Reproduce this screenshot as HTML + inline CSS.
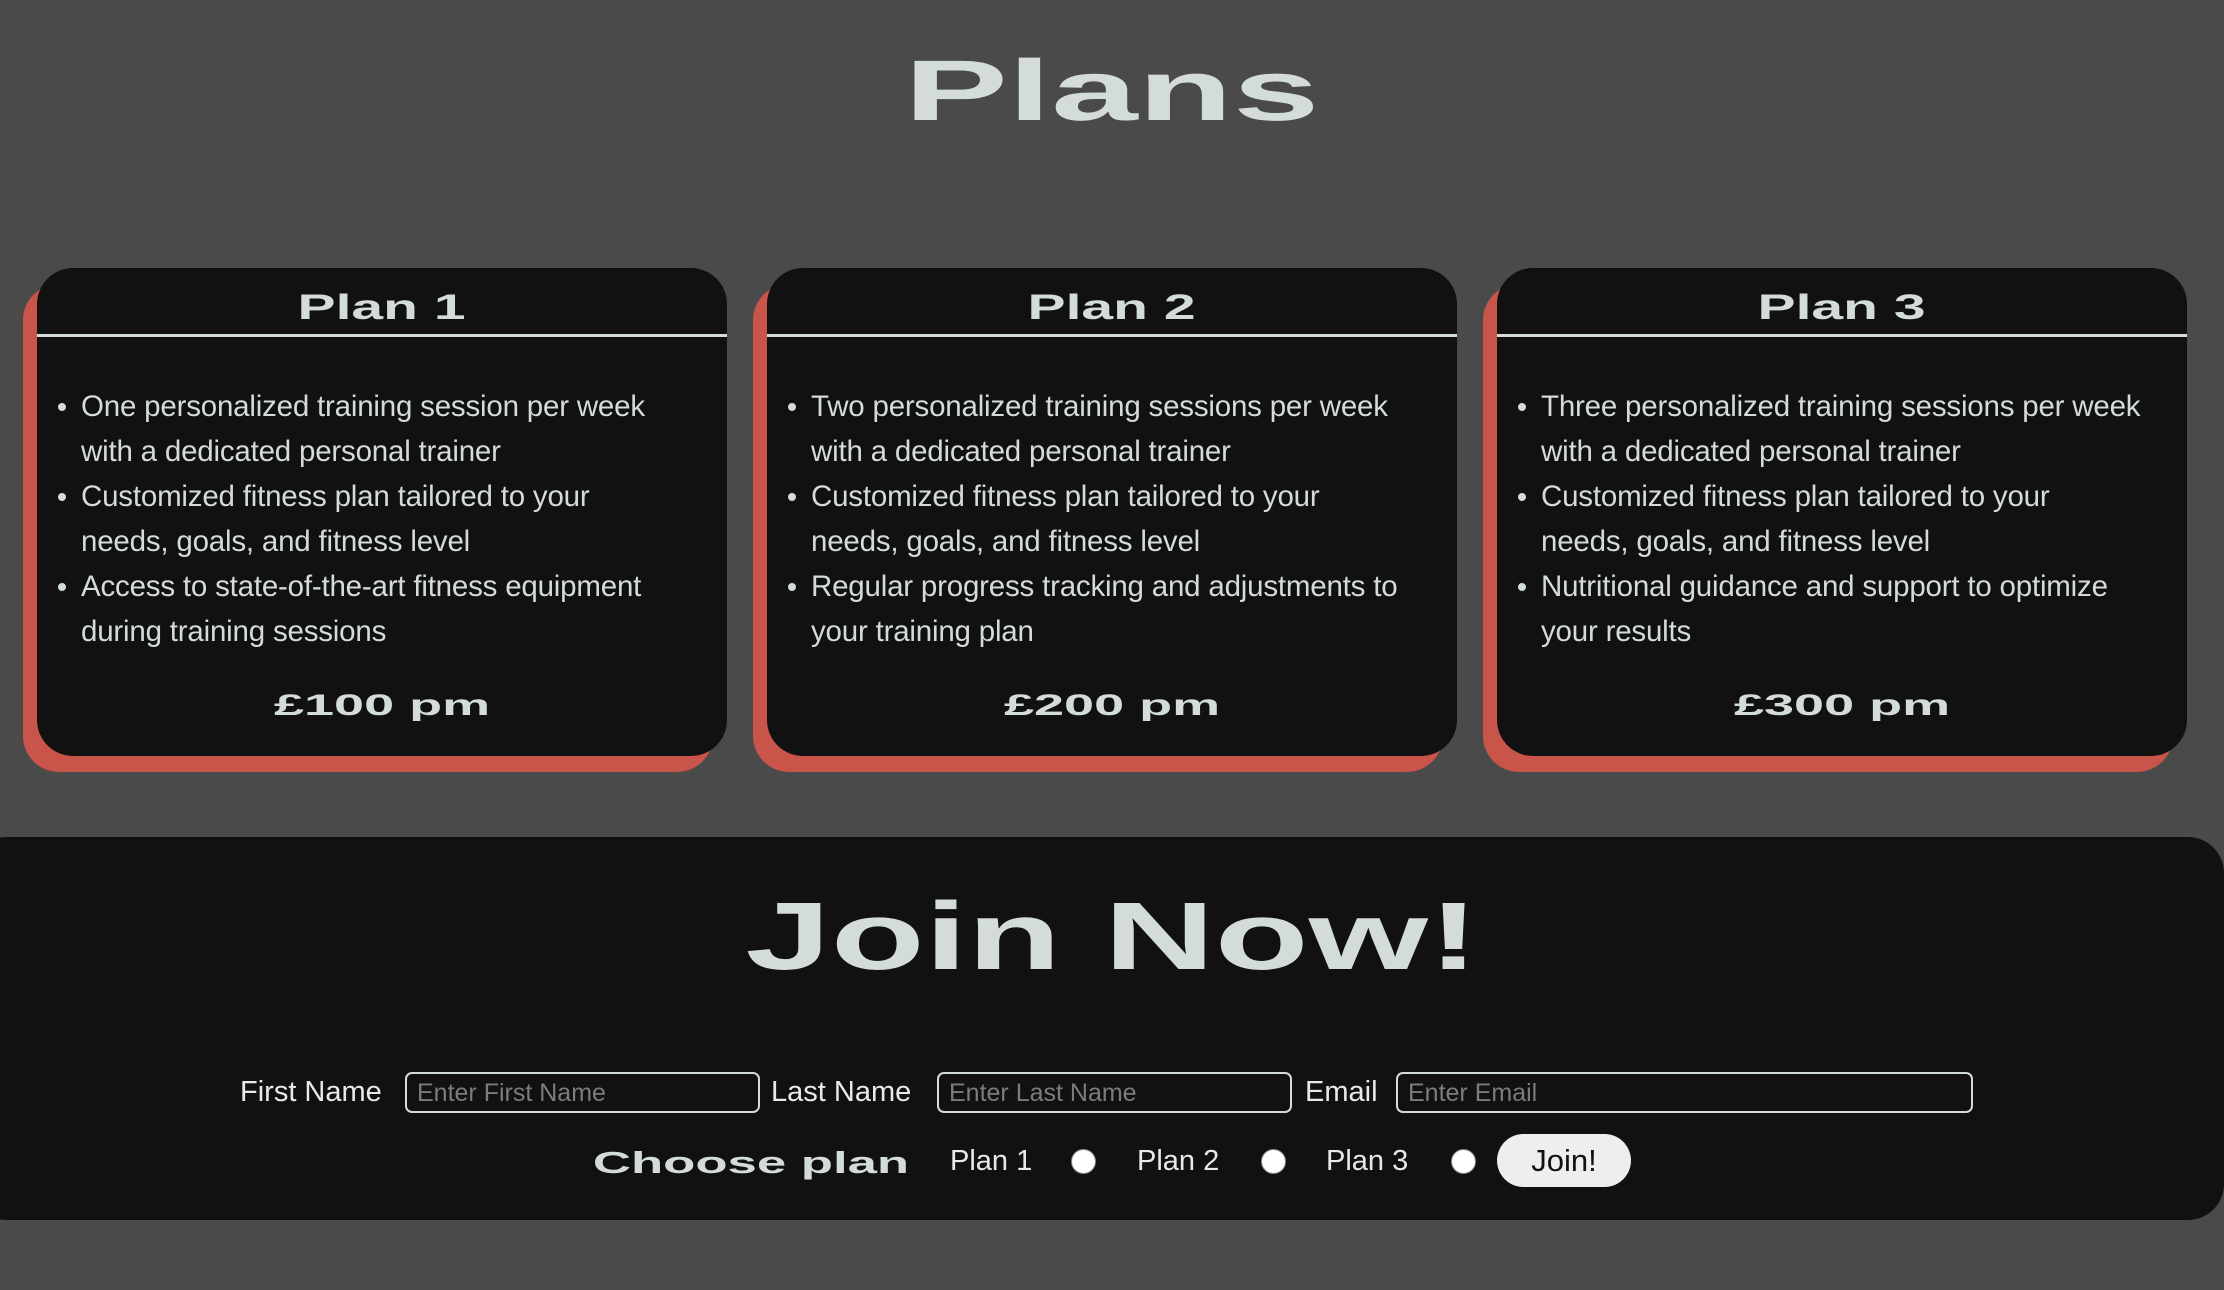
<!DOCTYPE html>
<html><head><meta charset="utf-8"><style>
*{margin:0;padding:0;box-sizing:border-box}
body{width:2224px;height:1290px;background:#4a4a4a;font-family:"Liberation Sans",sans-serif;color:#d3dcd7;position:relative;overflow:hidden}
.ext{position:absolute;font-weight:bold;white-space:nowrap;text-align:center;line-height:1}
.ext span{display:inline-block}
.shadow{position:absolute;background:#c9554a;border-radius:36px;width:690px;height:488px}
.card{position:absolute;background:#111;border-radius:36px;width:690px;height:488px;top:268px}
.card hr{position:absolute;left:0;right:0;top:66px;border:none;height:3px;background:#d3dcd7}
.card ul{position:absolute;left:44px;top:116px;width:640px;list-style:none;font-size:29.5px;line-height:45px;letter-spacing:-0.2px;white-space:nowrap}
.card li{position:relative}
.card li:before{content:"";position:absolute;left:-23px;top:19px;width:8px;height:8px;border-radius:50%;background:#d3dcd7}
.join{position:absolute;left:-30px;width:2254px;top:837px;height:383px;background:#111;border-radius:36px}
.lbl{position:absolute;font-size:29px;line-height:1;color:#e6ebe8}
.inp{position:absolute;top:1072px;height:41px;border:2px solid #d3dcd7;border-radius:7px;font-size:25px;color:#7c7c7c;padding:6px 10px;line-height:26px;background:#111}
.radio{position:absolute;top:1149px;width:25px;height:25px;border-radius:50%;background:#fff;border:1px solid #888}
</style></head><body>
<div class="ext" style="left:0;width:2224px;top:48px;font-size:86px"><span style="transform:scaleX(1.81)">Plans</span></div>

<div class="shadow" style="left:23px;top:284px"></div>
<div class="shadow" style="left:753px;top:284px"></div>
<div class="shadow" style="left:1483px;top:284px"></div>

<div class="card" style="left:37px">
<div class="ext" style="left:0;width:690px;top:22px;font-size:35px"><span style="transform:scaleX(1.63)">Plan 1</span></div>
<hr>
<ul><li>One personalized training session per week<br>with a dedicated personal trainer</li><li>Customized fitness plan tailored to your<br>needs, goals, and fitness level</li><li>Access to state-of-the-art fitness equipment<br>during training sessions</li></ul>
<div class="ext" style="left:0;width:690px;top:423px;font-size:30px"><span style="transform:scaleX(1.8)">£100 pm</span></div>
</div>
<div class="card" style="left:767px">
<div class="ext" style="left:0;width:690px;top:22px;font-size:35px"><span style="transform:scaleX(1.63)">Plan 2</span></div>
<hr>
<ul><li>Two personalized training sessions per week<br>with a dedicated personal trainer</li><li>Customized fitness plan tailored to your<br>needs, goals, and fitness level</li><li>Regular progress tracking and adjustments to<br>your training plan</li></ul>
<div class="ext" style="left:0;width:690px;top:423px;font-size:30px"><span style="transform:scaleX(1.8)">£200 pm</span></div>
</div>
<div class="card" style="left:1497px">
<div class="ext" style="left:0;width:690px;top:22px;font-size:35px"><span style="transform:scaleX(1.63)">Plan 3</span></div>
<hr>
<ul><li>Three personalized training sessions per week<br>with a dedicated personal trainer</li><li>Customized fitness plan tailored to your<br>needs, goals, and fitness level</li><li>Nutritional guidance and support to optimize<br>your results</li></ul>
<div class="ext" style="left:0;width:690px;top:423px;font-size:30px"><span style="transform:scaleX(1.8)">£300 pm</span></div>
</div>

<div class="join"></div>
<div class="ext" style="left:0;width:2224px;top:889px;font-size:96px"><span style="transform:scaleX(1.6)">Join Now!</span></div>

<div class="lbl" style="left:240px;top:1078px">First Name</div>
<div class="inp" style="left:405px;width:355px">Enter First Name</div>
<div class="lbl" style="left:771px;top:1078px">Last Name</div>
<div class="inp" style="left:937px;width:355px">Enter Last Name</div>
<div class="lbl" style="left:1305px;top:1078px">Email</div>
<div class="inp" style="left:1396px;width:577px">Enter Email</div>

<div class="ext" style="left:593px;width:316px;top:1147px;font-size:31px"><span style="transform:scaleX(1.7)">Choose plan</span></div>
<div class="lbl" style="left:950px;top:1147px">Plan 1</div>
<div class="radio" style="left:1071px"></div>
<div class="lbl" style="left:1137px;top:1147px">Plan 2</div>
<div class="radio" style="left:1261px"></div>
<div class="lbl" style="left:1326px;top:1147px">Plan 3</div>
<div class="radio" style="left:1451px"></div>
<div style="position:absolute;left:1497px;top:1134px;width:134px;height:53px;border-radius:27px;background:#eee;color:#111;font-size:31px;text-align:center;line-height:53px">Join!</div>
</body></html>
